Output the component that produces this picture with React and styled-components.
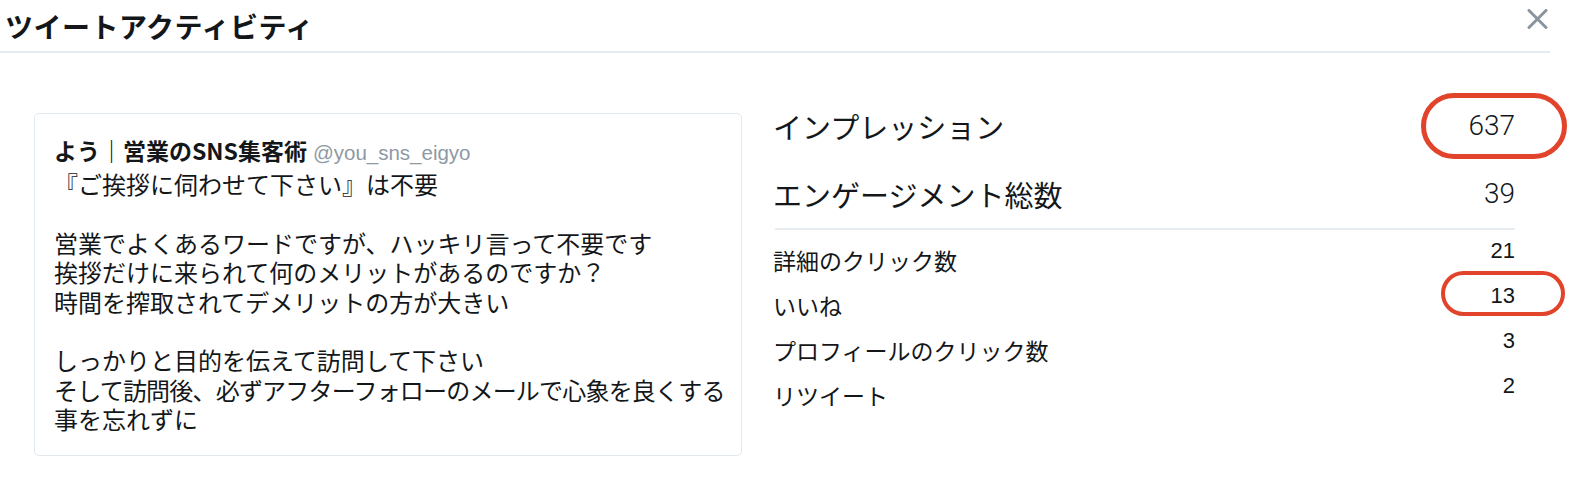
import React from 'react'
import styled, { createGlobalStyle } from 'styled-components'

const Global = createGlobalStyle`
  html, body { margin: 0; padding: 0; background: #fff; }
  body {
    font-family: "Noto Sans CJK JP", "Liberation Sans", sans-serif;
    color: #14171a;
  }
`

const Header = styled.header`
  width: 1550px;
  height: 53px;
  box-sizing: border-box;
  padding: 8px 2px 0 5px;
  display: flex;
  justify-content: space-between;
  align-items: flex-start;
  border-bottom: 2px solid #e6ecf0;
`
const Title = styled.h1`
  margin: 0;
  font-size: 28px;
  line-height: 36px;
  font-weight: 700;
  letter-spacing: 0.5px;
  color: #14171a;
`
const Close = styled.button`
  width: 22px;
  height: 22px;
  padding: 0;
  border: 0;
  background: none;
  display: flex;
  align-items: center;
  justify-content: center;
`

const Body = styled.main`
  display: flex;
  align-items: flex-start;
  gap: 31px;
  padding-left: 34px;
`

const Card = styled.section`
  width: 708px;
  box-sizing: border-box;
  margin-top: 60px;
  padding: 21px 19px;
  border: 1px solid #e1e8ed;
  border-radius: 5px;
`
const Author = styled.div`
  line-height: 31px;
  white-space: nowrap;
`
const Name = styled.span`
  font-size: 23px;
  font-weight: 700;
`
const Handle = styled.span`
  font-family: "Liberation Sans", sans-serif;
  font-size: 20.5px;
  color: #8e99a3;
  margin-left: 6px;
`
const Text = styled.p`
  margin: 0;
  font-size: 24px;
  line-height: 29.4px;
  letter-spacing: ${p => (p.$tight ? '-0.8px' : '0')};
  white-space: nowrap;
  min-height: 29.4px;
`

const Stats = styled.section`
  width: 742px;
  padding-top: 39px;
`
const BigRow = styled.div`
  height: 68px;
  display: flex;
  justify-content: space-between;
  align-items: center;
`
const BigLabel = styled.span`
  font-size: 29px;
  line-height: 36px;
`
const BigValue = styled.span`
  position: relative;
  font-family: Roboto, "Liberation Sans", sans-serif;
  font-weight: 300;
  font-size: 28px;
  line-height: 36px;
  color: #14171a;
`
const Divider = styled.hr`
  margin: 0 0 8px 2px;
  border: 0;
  border-top: 2px solid #e6ecf0;
`
const Row = styled.div`
  height: 45px;
  display: flex;
  justify-content: space-between;
  align-items: flex-start;
`
const Label = styled.span`
  margin-top: 9px;
  font-size: 23px;
  line-height: 26px;
`
const Value = styled.span`
  position: relative;
  font-family: "Liberation Sans", sans-serif;
  font-size: 22px;
  line-height: 26px;
`
const Ring = styled.span`
  position: absolute;
  top: ${p => p.$t}px;
  bottom: ${p => p.$b}px;
  left: ${p => p.$l}px;
  right: ${p => p.$r}px;
  border: ${p => p.$w}px solid #e2432b;
  border-radius: 999px;
`

const tweet = [
  '『ご挨拶に伺わせて下さい』は不要',
  '',
  '営業でよくあるワードですが、ハッキリ言って不要です',
  '挨拶だけに来られて何のメリットがあるのですか？',
  '時間を搾取されてデメリットの方が大きい',
  '',
  'しっかりと目的を伝えて訪問して下さい',
  'そして訪問後、必ずアフターフォローのメールで心象を良くする',
  '事を忘れずに',
]

const details = [
  { label: '詳細のクリック数', value: 21 },
  { label: 'いいね', value: 13, ring: true },
  { label: 'プロフィールのクリック数', value: 3 },
  { label: 'リツイート', value: 2 },
]

export default function App() {
  return (
    <>
      <Global />
      <Header>
        <Title>ツイートアクティビティ</Title>
        <Close aria-label="閉じる">
          <svg width="21" height="20" viewBox="0 0 21 20">
            <path d="M2 1.5 L19 18.5 M19 1.5 L2 18.5" stroke="#8a949e" strokeWidth="3" strokeLinecap="round" />
          </svg>
        </Close>
      </Header>
      <Body>
        <Card>
          <Author>
            <Name>よう｜営業のSNS集客術</Name>
            <Handle>@you_sns_eigyo</Handle>
          </Author>
          {tweet.map((line, i) => (
            <Text key={i} $tight={line.length > 26}>{line}</Text>
          ))}
        </Card>
        <Stats>
          <BigRow>
            <BigLabel>インプレッション</BigLabel>
            <BigValue>
              637
              <Ring $t={-15} $b={-15} $l={-47} $r={-52} $w={5} />
            </BigValue>
          </BigRow>
          <BigRow>
            <BigLabel>エンゲージメント総数</BigLabel>
            <BigValue>39</BigValue>
          </BigRow>
          <Divider />
          {details.map(d => (
            <Row key={d.label}>
              <Label>{d.label}</Label>
              <Value>
                {d.value}
                {d.ring && <Ring $t={-12} $b={-7} $l={-50} $r={-50} $w={4.5} />}
              </Value>
            </Row>
          ))}
        </Stats>
      </Body>
    </>
  )
}
